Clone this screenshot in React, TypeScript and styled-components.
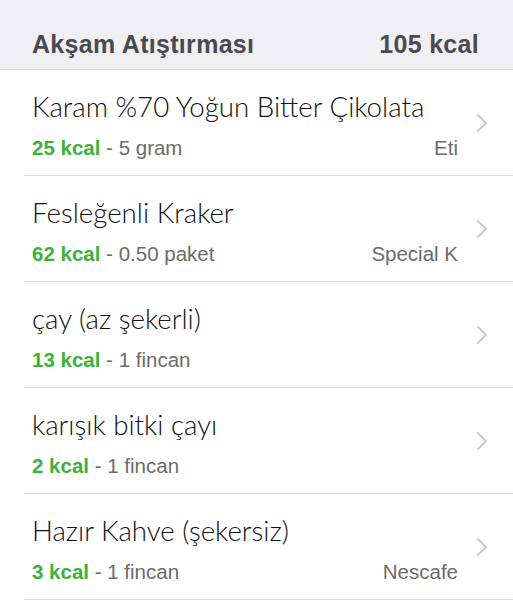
import styled, { createGlobalStyle } from 'styled-components'

const items = [
    { name: 'Karam %70 Yoğun Bitter Çikolata', kcal: 25, amount: '5 gram', brand: 'Eti' },
    { name: 'Fesleğenli Kraker', kcal: 62, amount: '0.50 paket', brand: 'Special K' },
    { name: 'çay (az şekerli)', kcal: 13, amount: '1 fincan', brand: '' },
    { name: 'karışık bitki çayı', kcal: 2, amount: '1 fincan', brand: '' },
    { name: 'Hazır Kahve (şekersiz)', kcal: 3, amount: '1 fincan', brand: 'Nescafe' },
]

export default function App() {
    return (
        <>
            <GlobalStyle />
            <Page>
                <Header>
                    <HeaderTitle>Akşam Atıştırması</HeaderTitle>
                    <HeaderTitle>105 kcal</HeaderTitle>
                </Header>
                {items.map((item) => (
                    <Row key={item.name}>
                        <RowText>
                            <Name>{item.name}</Name>
                            <Details>
                                <span>
                                    <Kcal>{item.kcal} kcal</Kcal> - {item.amount}
                                </span>
                                <span>{item.brand}</span>
                            </Details>
                        </RowText>
                        <Chevron viewBox='0 0 12 20'>
                            <path d='M1.5 1.5 L10 10 L1.5 18.5' fill='none' stroke='#c7c7cc' strokeWidth='1.8' />
                        </Chevron>
                    </Row>
                ))}
            </Page>
        </>
    )
}

const GlobalStyle = createGlobalStyle`
    body {
        margin: 0;
        background: #fff;
        font-family: 'Liberation Sans', Arial, sans-serif;
    }
`

const Page = styled.div`
    width: 513px;
    height: 600px;
    overflow: hidden;
`

const Header = styled.div`
    height: 70px;
    display: flex;
    justify-content: space-between;
    align-items: flex-end;
    padding: 0 34px 11px 32px;
    box-sizing: border-box;
    background: #efeff4;
    border-bottom: 1px solid #d8d8dc;
`

const HeaderTitle = styled.div`
    font-size: 25px;
    line-height: 28px;
    font-weight: bold;
    letter-spacing: 0.3px;
    color: #4a4a4c;
`

const Row = styled.div`
    height: 105px;
    margin-left: 24px;
    padding-left: 8px;
    display: flex;
    align-items: center;
    border-bottom: 1px solid #dcdcdf;
`

const RowText = styled.div`
    flex: 1;
    display: flex;
    flex-direction: column;
    gap: 14px;
    padding-top: 4px;
    margin-right: 18px;
`

const Name = styled.div`
    font-family: Lato, 'Liberation Sans', sans-serif;
    font-size: 27.7px;
    font-weight: 300;
    line-height: 31px;
    color: #111;
`

const Details = styled.div`
    display: flex;
    justify-content: space-between;
    font-size: 20.5px;
    line-height: 23px;
    color: #6b6b6b;
`

const Kcal = styled.b`
    color: #3bb33b;
`

const Chevron = styled.svg`
    width: 12px;
    height: 20px;
    margin-right: 25px;
    flex-shrink: 0;
`
